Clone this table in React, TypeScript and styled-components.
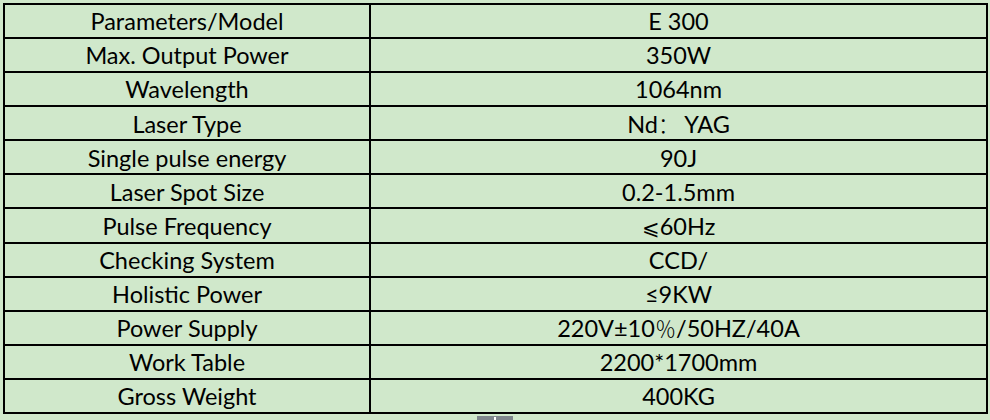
import React from "react";
import styled, { createGlobalStyle } from "styled-components";

const GlobalStyle = createGlobalStyle`
  html, body {
    margin: 0;
    padding: 0;
    background: #d0e8cb;
  }
`;

const Page = styled.div`
  position: relative;
  width: 990px;
  height: 420px;
  padding: 3px 0 0 3px;
  box-sizing: border-box;
  background: #d0e8cb;
  overflow: hidden;
`;

const SpecTable = styled.table`
  width: 985px;
  height: 411px;
  border-collapse: collapse;
  table-layout: fixed;
  font-family: Lato, "Open Sans", sans-serif;
  font-size: 23.5px;
  color: #000;
`;

const Cell = styled.td<{ $first?: boolean }>`
  width: ${({ $first }) => ($first ? "364px" : "auto")};
  border: 2px solid #000;
  text-align: center;
  vertical-align: middle;
  padding: 2px 0 0;
  line-height: 1;
`;

const Wide = styled.span<{ $cjk?: boolean }>`
  font-family: ${({ $cjk }) =>
    $cjk ? '"Noto Sans CJK SC", sans-serif' : '"DejaVu Sans", sans-serif'};
  font-size: 0.9em;
  font-weight: 300;
`;

const Handle = styled.div`
  position: absolute;
  left: 477px;
  top: 416px;
  width: 36px;
  height: 8px;
  background: #7f868c;

  &::after {
    content: "";
    position: absolute;
    left: 17px;
    top: 1px;
    width: 2px;
    height: 4px;
    background: #fff;
  }
`;

const rows: [string, React.ReactNode][] = [
  ["Parameters/Model", "E 300"],
  ["Max. Output Power", "350W"],
  ["Wavelength", "1064nm"],
  ["Laser Type", <>Nd<Wide $cjk>：</Wide> YAG</>],
  ["Single pulse energy", "90J"],
  ["Laser Spot Size", "0.2-1.5mm"],
  ["Pulse Frequency", <><Wide>⩽</Wide>60Hz</>],
  ["Checking System", "CCD/"],
  ["Holistic Power", "≤9KW"],
  ["Power Supply", <>220V±10<Wide $cjk>％</Wide>/50HZ/40A</>],
  ["Work Table", "2200*1700mm"],
  ["Gross Weight", "400KG"],
];

const App: React.FC = () => {
  return (
    <>
      <GlobalStyle />
      <Page>
        <SpecTable>
          <tbody>
            {rows.map(([label, value]) => (
              <tr key={label}>
                <Cell $first>{label}</Cell>
                <Cell>{value}</Cell>
              </tr>
            ))}
          </tbody>
        </SpecTable>
        <Handle />
      </Page>
    </>
  );
};

export default App;
